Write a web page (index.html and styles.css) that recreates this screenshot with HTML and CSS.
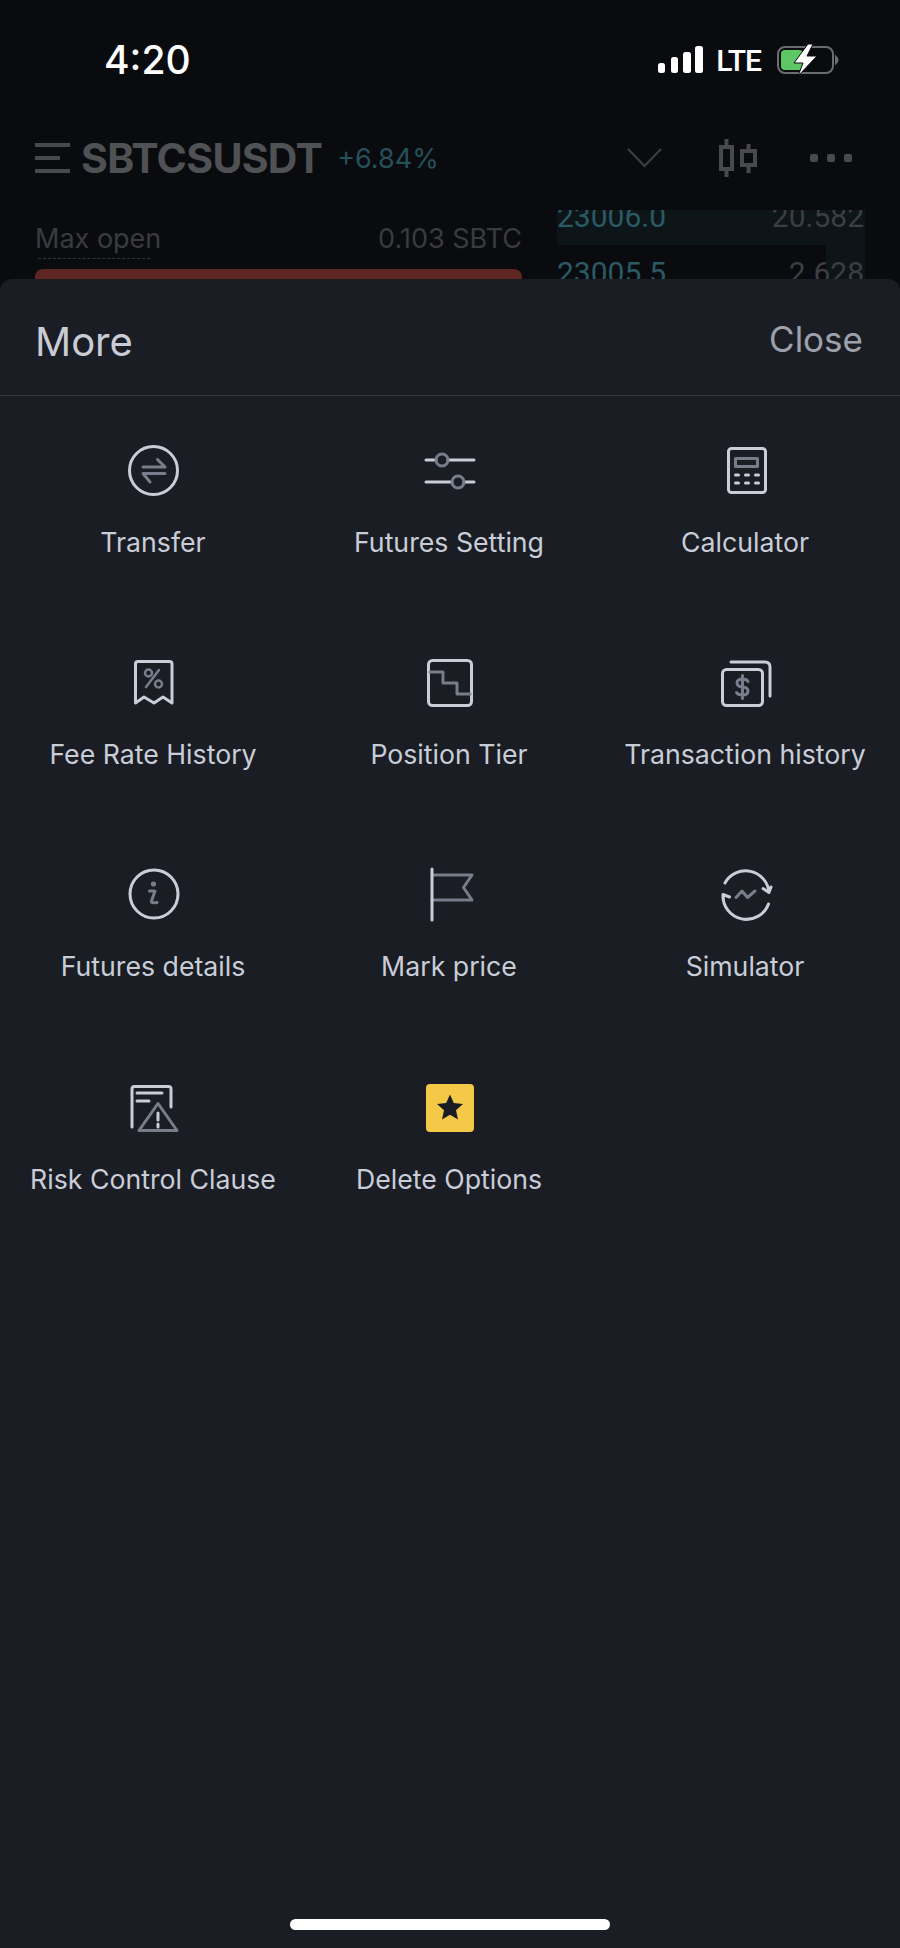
FILE: index.html
```html
<!DOCTYPE html>
<html lang="en">
<head>
    <meta charset="UTF-8">
    <meta name="viewport" content="width=device-width, initial-scale=1.0">
    <title>More</title>
    <link rel="stylesheet" href="styles.css">
</head>
<body>
    <div class="page">
        <div class="backdrop">
            <div class="status-bar">
                <span class="time">4:20</span>
                <div class="status-icons">
                    <svg class="signal" width="46" height="28" viewBox="0 0 46 28">
                        <rect x="0" y="17" width="7" height="10" rx="2.5"/>
                        <rect x="13" y="11" width="7" height="16" rx="2.5"/>
                        <rect x="25" y="6" width="8" height="21" rx="2.5"/>
                        <rect x="37" y="0" width="8" height="27" rx="2.5"/>
                    </svg>
                    <span class="lte">LTE</span>
                    <svg class="battery" width="64" height="32" viewBox="0 0 64 32">
                        <rect x="2" y="3" width="55" height="26" rx="7" fill="none" stroke="#6b6c6c" stroke-width="2"/>
                        <rect x="5" y="6" width="22" height="20" rx="4" fill="#5ec765"/>
                        <path d="M60 13 q3 3 0 6 z" fill="#6b6c6c" stroke="#6b6c6c" stroke-width="2"/>
                        <path d="M32 0 L18 19 H27 L22 32 L41 12 H31 L37 0 Z" fill="#fff" stroke="#0a0b0f" stroke-width="1"/>
                    </svg>
                </div>
            </div>

            <div class="market-head">
                <svg class="menu-icon" width="35" height="32" viewBox="0 0 35 32">
                    <rect x="0" y="1" width="35" height="4"/>
                    <rect x="0" y="14" width="25" height="4"/>
                    <rect x="0" y="27" width="35" height="4"/>
                </svg>
                <span class="symbol">SBTCSUSDT</span>
                <span class="change">+6.84%</span>
                <svg class="chevron" width="35" height="20" viewBox="0 0 35 20">
                    <path d="M1 1 L17.5 18 L34 1" fill="none" stroke="#3e3f43" stroke-width="2"/>
                </svg>
                <svg class="candles" width="38" height="38" viewBox="0 0 38 38">
                    <g fill="none" stroke="#48494d" stroke-width="4">
                        <rect x="2" y="8" width="11" height="22"/>
                        <path d="M7.5 0 V8 M7.5 30 V38"/>
                        <rect x="23" y="12" width="13" height="14"/>
                        <path d="M29.5 5 V12 M29.5 26 V34"/>
                    </g>
                </svg>
                <div class="dots"><i></i><i></i><i></i></div>
            </div>

            <div class="market-body">
                <div class="order-form">
                    <div class="max-open">
                        <span>Max open</span>
                        <span>0.103 SBTC</span>
                    </div>
                    <div class="dash"></div>
                    <div class="sell-btn"></div>
                </div>
                <div class="book">
                    <div class="book-row first">
                        <span class="price">23006.0</span>
                        <span class="qty">20.582</span>
                    </div>
                    <div class="book-row second">
                        <span class="price">23005.5</span>
                        <span class="qty">2.628</span>
                    </div>
                </div>
            </div>
        </div>

        <div class="sheet">
            <div class="sheet-head">
                <span class="sheet-title">More</span>
                <span class="sheet-close">Close</span>
            </div>

            <div class="grid">
                <div class="item">
                    <svg class="icon" viewBox="0 0 60 60">
                        <circle class="line" cx="30.5" cy="30.5" r="24"/>
                        <path class="dim" d="M20 27 H42 L34.5 19.5 M42 33.5 H20 L27 42"/>
                    </svg>
                    <span class="label">Transfer</span>
                </div>
                <div class="item">
                    <svg class="icon" viewBox="0 0 60 60">
                        <path class="line" d="M7 20 H17 M29 20 H55 M7 42 H33 M45 42 H55"/>
                        <circle class="dim" cx="23" cy="20" r="6"/>
                        <circle class="dim" cx="39" cy="42" r="6"/>
                    </svg>
                    <span class="label">Futures Setting</span>
                </div>
                <div class="item">
                    <svg class="icon" viewBox="0 0 60 60">
                        <rect class="line" x="13.5" y="8.5" width="37" height="44" rx="3"/>
                        <rect class="dim" x="20.5" y="18.5" width="22" height="8"/>
                        <path class="line" d="M20.5 35 H23.5 M30.5 35 H33.5 M40.5 35 H43.5 M20.5 43 H23.5 M30.5 43 H33.5 M40.5 43 H43.5"/>
                    </svg>
                    <span class="label">Calculator</span>
                </div>

                <div class="item">
                    <svg class="icon" viewBox="0 0 60 60">
                        <path class="line" d="M12.5 51 V12 Q12.5 9.5 15 9.5 H46.5 Q49 9.5 49 12 V51 L40 45 L31 51 L21 45 Z"/>
                        <circle class="dim thin" cx="25.5" cy="21" r="3.5"/>
                        <circle class="dim thin" cx="35.5" cy="32" r="3.5"/>
                        <path class="dim thin" d="M36 18 L23 35"/>
                    </svg>
                    <span class="label">Fee Rate History</span>
                </div>
                <div class="item">
                    <svg class="icon" viewBox="0 0 60 60">
                        <rect class="line" x="9.5" y="8.5" width="43" height="45" rx="4"/>
                        <path class="dim" d="M11 20 H24 V31 H38 V42 H51"/>
                    </svg>
                    <span class="label">Position Tier</span>
                </div>
                <div class="item">
                    <svg class="icon" viewBox="0 0 60 60">
                        <rect class="line" x="7.5" y="17.5" width="40" height="36" rx="4"/>
                        <path class="line" d="M16 10 H50 Q55 10 55 15 V44"/>
                        <path class="dim" d="M33 29.5 Q32 27 27.5 27 Q22 27 22 31 Q22 34.5 27.5 35 Q33 35.5 33 39 Q33 43 27.5 43 Q23 43 21.5 40.5 M27.5 23.5 V46.5"/>
                    </svg>
                    <span class="label">Transaction history</span>
                </div>

                <div class="item">
                    <svg class="icon" viewBox="0 0 60 60">
                        <circle class="line" cx="31" cy="30" r="24"/>
                        <circle class="dot" cx="30.5" cy="20" r="2.6"/>
                        <path class="dim" d="M26.5 27 H32 L28.5 37 Q28 39.5 34 38.5"/>
                    </svg>
                    <span class="label">Futures details</span>
                </div>
                <div class="item">
                    <svg class="icon" viewBox="0 0 60 60">
                        <path class="dim" d="M13 11 H53 L44.5 23.5 L53 36 H13"/>
                        <path class="line" d="M13 5 V56"/>
                    </svg>
                    <span class="label">Mark price</span>
                </div>
                <div class="item">
                    <svg class="icon" viewBox="0 0 60 60">
                        <path class="line" d="M10 19 A23.5 23.5 0 0 1 54 28.5 L48 24.5 M54 28.5 L56 23 M53.5 40 A23.5 23.5 0 0 1 8 30.5 L14.5 33 M8 30.5 L8.5 36.5"/>
                        <path class="dim" d="M21 33.5 L27 27 L32.5 33.5 L40 27"/>
                    </svg>
                    <span class="label">Simulator</span>
                </div>

                <div class="item">
                    <svg class="icon" viewBox="0 0 60 60">
                        <path class="line" d="M9 50 V12 Q9 9.5 11.5 9.5 H45.5 Q48 9.5 48 12 V30"/>
                        <path class="line" d="M14 16 H39 M14 24 H26"/>
                        <path class="dim" d="M35 26.5 L54 53.5 H16 Z"/>
                        <path class="line" d="M35 36 V43 M35 47 V50"/>
                    </svg>
                    <span class="label">Risk Control Clause</span>
                </div>
                <div class="item">
                    <svg class="icon" viewBox="0 0 60 60">
                        <rect x="7" y="7" width="48" height="48" rx="4" fill="#f4c948"/>
                        <path d="M31 17.5 L34.8 26 L44 27 L37 33.2 L39 42.5 L31 37.8 L23 42.5 L25 33.2 L18 27 L27.2 26 Z" fill="#1a1d24"/>
                    </svg>
                    <span class="label">Delete Options</span>
                </div>
            </div>

            <div class="home-bar"></div>
        </div>
    </div>
</body>
</html>
```

FILE: styles.css
```css
* {
    box-sizing: border-box;
}
body {
    margin: 0;
    background-color: #0a0b0f;
    font-family: Inter, "Noto Sans", sans-serif;
}
.page {
    width: 900px;
    height: 1948px;
    display: flex;
    flex-direction: column;
    overflow: hidden;
}

/* dimmed screen behind the sheet */
.backdrop {
    height: 279px;
    flex-shrink: 0;
    overflow: hidden;
}
.status-bar {
    height: 120px;
    display: flex;
    justify-content: space-between;
    align-items: center;
    padding: 0 60px 0 104px;
}
.time {
    margin-bottom: 2px;
    color: #fff;
    font-size: 39px;
    font-weight: 500;
}
.status-icons {
    display: flex;
    align-items: center;
    gap: 12px;
}
.signal {
    fill: #fff;
}
.lte {
    color: #fff;
    font-family: Roboto, sans-serif;
    font-size: 30px;
    font-weight: 500;
    letter-spacing: -1px;
}
.battery {
    margin-left: 3px;
}
.market-head {
    height: 90px;
    display: flex;
    align-items: center;
    padding: 0 48px 14px 35px;
}
.menu-icon {
    fill: #48494d;
}
.symbol {
    margin-left: 11px;
    color: #505155;
    font-size: 41px;
    font-weight: 700;
    letter-spacing: -0.7px;
}
.change {
    margin-left: 15px;
    color: #26505a;
    font-size: 27px;
}
.chevron {
    margin-left: auto;
}
.candles {
    margin-left: 57px;
}
.dots {
    margin-left: 53px;
    display: flex;
    gap: 9px;
}
.dots i {
    width: 8px;
    height: 8px;
    border-radius: 2px;
    background-color: #48494d;
}
.market-body {
    display: flex;
    padding: 0 35px;
    gap: 35px;
}
.order-form {
    width: 487px;
    padding-top: 13px;
}
.max-open {
    display: flex;
    justify-content: space-between;
    color: #3a3b3f;
    font-size: 27px;
    line-height: 32px;
}
.dash {
    width: 112px;
    margin: 3px 0 10px 3px;
    border-bottom: 1px dashed #333438;
}
.sell-btn {
    height: 40px;
    border-radius: 8px;
    background-color: #5e2622;
}
.book {
    width: 308px;
    height: 69px;
    overflow: hidden;
    font-family: Roboto, sans-serif;
    font-size: 30px;
}
.book-row {
    display: flex;
    justify-content: space-between;
    padding-right: 1px;
    line-height: 34px;
}
.book-row.first {
    height: 35px;
    background-color: #0d1518;
}
.book-row.first span {
    margin-top: -10px;
}
.book-row.second {
    height: 34px;
    padding-top: 11px;
    background: linear-gradient(to right, transparent 269px, #0d1518 269px);
}
.price {
    color: #2a5a63;
}
.qty {
    color: #3c3e42;
}

/* bottom sheet */
.sheet {
    flex: 1;
    display: flex;
    flex-direction: column;
    border-radius: 12px 12px 0 0;
    background-color: #1a1d24;
}
.sheet-head {
    height: 117px;
    display: flex;
    justify-content: space-between;
    align-items: center;
    padding: 8px 37px 0 35px;
    border-bottom: 1px solid #33363c;
}
.sheet-title {
    color: #c9ccd4;
    font-size: 40px;
}
.sheet-close {
    margin-bottom: 4px;
    color: #9da1ab;
    font-size: 35px;
}
.grid {
    display: grid;
    grid-template-columns: repeat(3, 296px);
    grid-auto-rows: 212.2px;
    padding: 44px 7px 0 5px;
}
.item {
    display: flex;
    flex-direction: column;
    align-items: center;
}
.icon {
    width: 60px;
    height: 60px;
}
.label {
    margin-top: 26px;
    color: #c9cdd8;
    font-size: 26.7px;
    line-height: 32px;
    white-space: nowrap;
}
.line, .dim {
    fill: none;
    stroke-width: 3;
    stroke-linecap: round;
    stroke-linejoin: round;
}
.line {
    stroke: #c9cdd8;
}
.dim {
    stroke: #777d8a;
}
.thin {
    stroke-width: 2.5;
}
.dot {
    fill: #777d8a;
}
.home-bar {
    width: 320px;
    height: 11px;
    margin: auto auto 18px;
    border-radius: 6px;
    background-color: #fff;
}
```
